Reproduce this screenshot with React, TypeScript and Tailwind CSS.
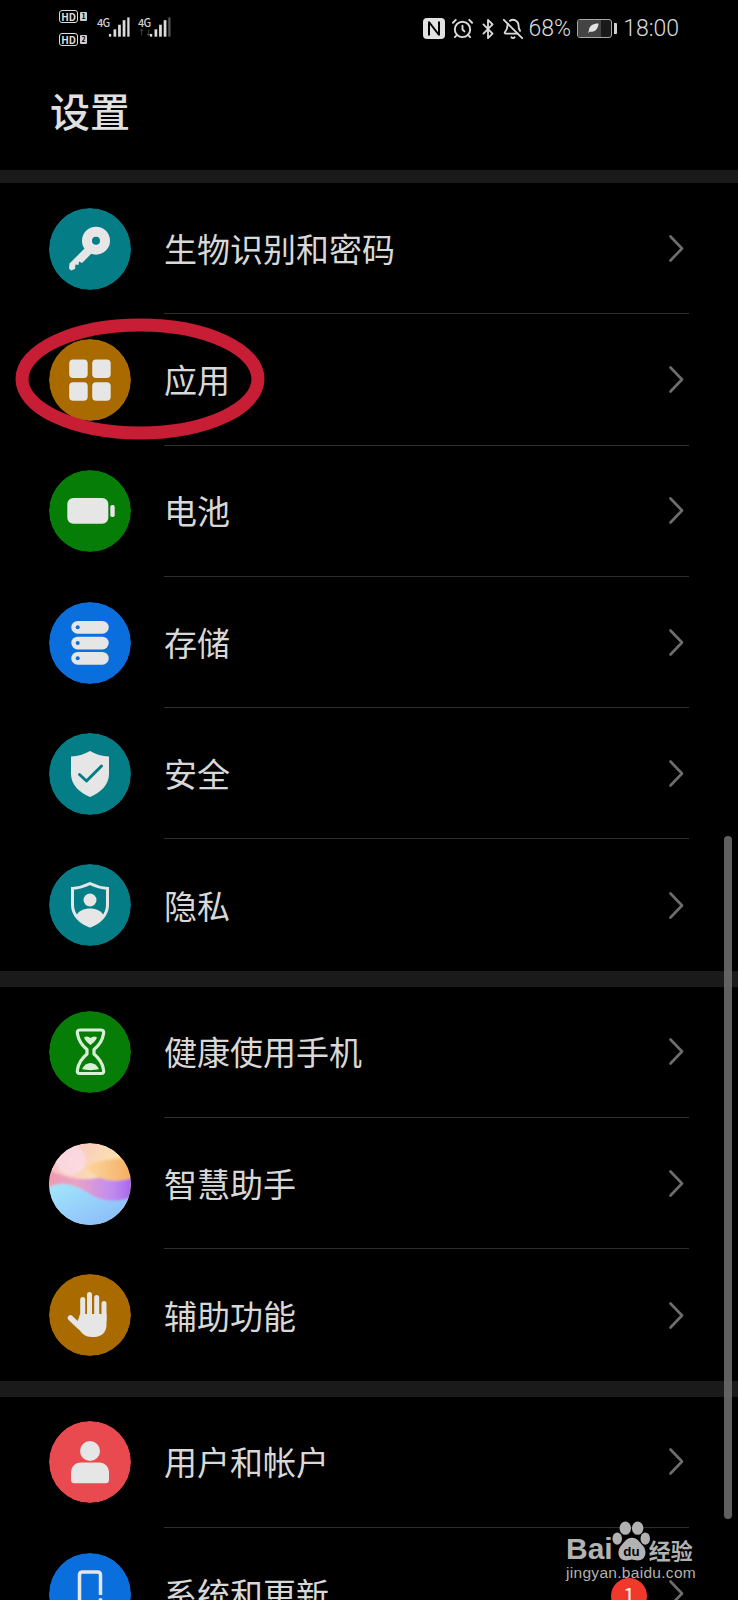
import type { ReactNode } from "react";
import { AlarmClock, BellOff, Bluetooth } from "lucide-react";

const TEAL = "#047d87";
const AMBER = "#a96a00";
const GREEN = "#067d06";
const BLUE = "#0a6fdc";
const INK = "#e6e6e6";

function Glyph({ children }: { children: ReactNode }) {
  return (
    <svg viewBox="0 0 82 82" className="h-[82px] w-[82px] rounded-full">
      {children}
    </svg>
  );
}

const KeyIcon = (
  <Glyph>
    <circle cx="41" cy="41" r="41" fill={TEAL} />
    <circle cx="47" cy="32.700" r="14" fill={INK} />
    <circle cx="47" cy="32.700" r="4" fill={TEAL} />
    <path
      fill={INK}
      d="M37 39l6 6-10 10-3-1.500-.5 3.500-3-.5-.5 4.500-4 1.500-2-2 .5-5z"
    />
  </Glyph>
);

const AppsIcon = (
  <Glyph>
    <circle cx="41" cy="41" r="41" fill={AMBER} />
    <rect x="20.200" y="20.500" width="18.500" height="18.500" rx="4" fill={INK} />
    <rect x="43.200" y="20.500" width="18.500" height="18.500" rx="4" fill={INK} />
    <rect x="20.200" y="43.200" width="18.500" height="18.500" rx="4" fill={INK} />
    <rect x="43.200" y="43.200" width="18.500" height="18.500" rx="4" fill={INK} />
  </Glyph>
);

const BatteryIcon = (
  <Glyph>
    <circle cx="41" cy="41" r="41" fill={GREEN} />
    <rect x="18.300" y="28" width="41" height="25.700" rx="6" fill={INK} />
    <rect x="61.300" y="35" width="4.400" height="12" rx="1.800" fill={INK} />
  </Glyph>
);

const StorageIcon = (
  <Glyph>
    <circle cx="41" cy="41" r="41" fill={BLUE} />
    {[19, 34.7, 50].map((y) => (
      <g key={y}>
        <rect x="22.300" y={y} width="37.400" height="12.700" rx="6.300" fill={INK} />
        <circle cx="28.700" cy={y + 6.3} r="2" fill={BLUE} />
      </g>
    ))}
  </Glyph>
);

const ShieldIcon = (
  <Glyph>
    <circle cx="41" cy="41" r="41" fill={TEAL} />
    <path
      fill={INK}
      d="M41 18c6 3.500 12 5 19 5.500V41c0 11-9 19-19 23-10-4-19-12-19-23V23.500C29 23 35 21.500 41 18z"
    />
    <path d="M30.500 41.500l7 6.500 15-15" fill="none" stroke={TEAL} strokeWidth="3" strokeLinecap="round" strokeLinejoin="round" />
  </Glyph>
);

const PrivacyIcon = (
  <Glyph>
    <circle cx="41" cy="41" r="41" fill={TEAL} />
    <path
      fill="none"
      stroke={INK}
      strokeWidth="3"
      d="M41 19.500c6 3 11 4.500 17.500 5V41c0 10-8 17.500-17.500 21-9.500-3.500-17.500-11-17.500-21V24.500c6.500-.5 11.500-2 17.500-5z"
    />
    <circle cx="41" cy="36" r="6.500" fill={INK} />
    <path fill={INK} d="M27.500 52c1-5 7.500-7.500 13.500-7.500S53.500 47 54.500 52c-3.500 5-8 8-13.500 10.500C35.500 60 31 57 27.500 52z" />
  </Glyph>
);

const HourglassIcon = (
  <Glyph>
    <circle cx="41" cy="41" r="41" fill={GREEN} />
    <path
      fill="none"
      stroke="#d8efd8"
      strokeWidth="3.200"
      strokeLinejoin="round"
      d="M31 19h21c2.500 0 3 1.500 2.500 4-1 6-4 11-9.500 15.500v4.500c5.500 4.500 8.500 9.500 9.500 15.500.5 2.500 0 4-2.500 4H31c-2.500 0-3-1.500-2.500-4 1-6 4-11 9.500-15.500v-4.500C32.500 34 29.500 29 28.500 23c-.5-2.500 0-4 2.500-4z"
    />
    <path fill="#d8efd8" d="M35 26.500c2.500-1.500 4.500-1 6.500.5 2-1.500 4-2 6.500-.5-1 3-4 5.500-6.500 7.500-2.500-2-5.500-4.500-6.500-7.500z" />
    <path fill="#d8efd8" d="M33 58c2-4 5-6 8.500-6s6.500 2 8.500 6c-5 1.500-12 1.500-17 0z" />
  </Glyph>
);

const AssistantIcon = (
  <Glyph>
    <defs>
      <linearGradient id="sphere-base" x1="0" y1="0" x2="1" y2="0.6">
        <stop offset="0" stopColor="#f6bcc8" />
        <stop offset="0.6" stopColor="#fbdcb4" />
        <stop offset="1" stopColor="#fbe3a8" />
      </linearGradient>
      <linearGradient id="sphere-blob" x1="0" y1="0" x2="1" y2="0">
        <stop offset="0" stopColor="#fbd7a0" />
        <stop offset="1" stopColor="#f6ab5c" />
      </linearGradient>
      <linearGradient id="sphere-band" x1="0" y1="0" x2="1" y2="0">
        <stop offset="0" stopColor="#f09aac" />
        <stop offset="0.35" stopColor="#e9a2c8" />
        <stop offset="0.75" stopColor="#bf8cf0" />
        <stop offset="1" stopColor="#a660e6" />
      </linearGradient>
      <linearGradient id="sphere-sea" x1="0" y1="0" x2="1" y2="1">
        <stop offset="0" stopColor="#a4e8fb" />
        <stop offset="1" stopColor="#84b2fa" />
      </linearGradient>
      <filter id="sphere-soft">
        <feGaussianBlur stdDeviation="1.200" />
      </filter>
    </defs>
    <circle cx="41" cy="41" r="41" fill="url(#sphere-base)" />
    <g filter="url(#sphere-soft)">
      <circle cx="22" cy="17" r="15" fill="#fbdbe6" opacity="0.8" />
      <path fill="url(#sphere-band)" d="M-4 26c10 3 20 9 36 10 10 1 20-2 54-8v40H-4z" />
      <path fill="url(#sphere-blob)" d="M36 24c10-6 30-10 50-8v18c-8 3-18 5-28 3-10-2-17-7-22-13z" />
      <path fill="url(#sphere-sea)" d="M-4 47c8-7 20-8 32-3 10 4 16 11 28 13 10 2 20 0 30-4v36H-4z" />
    </g>
  </Glyph>
);

const HandIcon = (
  <Glyph>
    <circle cx="41" cy="41" r="41" fill={AMBER} />
    <g stroke={INK} strokeWidth="5" strokeLinecap="round">
      <path d="M33.700 25.500V44" />
      <path d="M40.500 20.500V44" />
      <path d="M47.700 23.500V44" />
      <path d="M55 29.500V46" />
      <path d="M21.500 44l9.500 9" strokeWidth="5.500" />
    </g>
    <path fill={INK} d="M31 40h26.500v11c0 7-5 12-12 12h-3c-6 0-9-3-12-7l-3-5z" />
  </Glyph>
);

const UserIcon = (
  <Glyph>
    <circle cx="41" cy="41" r="41" fill="#e84a50" />
    <circle cx="41" cy="30" r="10" fill={INK} />
    <path fill={INK} d="M22 52c0-6 4-10.500 10-10.500h18c6 0 10 4.500 10 10.500v7c0 2-1.300 3.300-3.300 3.300H25.300C23.300 62.300 22 61 22 59z" />
  </Glyph>
);

const PhoneIcon = (
  <Glyph>
    <circle cx="41" cy="41" r="41" fill={BLUE} />
    <path
      fill="none"
      stroke={INK}
      strokeWidth="3.500"
      d="M51.500 42V22c0-2-1.200-3-3-3h-15c-1.800 0-3 1-3 3v38c0 2 1.200 3 3 3h15c1.800 0 3-1 3-3v-6"
    />
    <circle cx="51.500" cy="47" r="2" fill={INK} />
  </Glyph>
);

function Chevron() {
  return (
    <svg viewBox="0 0 15 27" className="h-[27px] w-[15px]" fill="none" stroke="#6e6e6e" strokeWidth="2.600">
      <path d="M1.500 1.500L13 13.500 1.500 25.500" strokeLinecap="round" strokeLinejoin="round" />
    </svg>
  );
}

function Row({ icon, label, last }: { icon: ReactNode; label: string; last?: boolean }) {
  return (
    <div className="flex h-[131.3px] items-center gap-[33px] px-[49px]">
      {icon}
      <div
        className={`flex flex-1 items-center justify-between self-stretch pr-[5px] ${
          last ? "" : "border-b border-[#2e2e2e]"
        }`}
      >
        <span className="text-[33px] leading-none text-[#d8d8d8]">{label}</span>
        <Chevron />
      </div>
    </div>
  );
}

function Band() {
  return <div className="h-[16px] bg-[#1a1a1a]" />;
}

function HdTag({ n }: { n: string }) {
  return (
    <div className="flex items-center gap-[2px]">
      <span className="flex h-[13px] w-[19px] items-center justify-center rounded-[3px] border border-[#dcdcdc] text-[10px] leading-none font-bold text-[#dcdcdc]">
        HD
      </span>
      <span className="flex h-[9px] w-[7px] items-center justify-center rounded-[1px] bg-[#cfcfcf] text-[7px] leading-none font-bold text-black">
        {n}
      </span>
    </div>
  );
}

function Signal({ dim }: { dim?: boolean }) {
  return (
    <div className="flex items-start">
      <div className="flex w-[11px] flex-col items-start">
        <span className="text-[11px] leading-[10px] font-medium tracking-[-0.8px] text-[#cfcfcf]">4G</span>
        {dim && <span className="pt-[1px] text-[7px] leading-[9px] text-[#777777]">↑↓</span>}
      </div>
      <svg viewBox="0 0 24 22" className="h-[21px] w-[22px]" fill="#dcdcdc">
        <rect x="1" y="18" width="2.500" height="3" />
        <rect x="6" y="13" width="3" height="8" />
        <rect x="11" y="8" width="3" height="13" />
        <rect x="16" y="3" width="3" height="18" />
        <rect x="21" y="0" width="2.500" height="21" fill={dim ? "#555555" : "#dcdcdc"} />
      </svg>
    </div>
  );
}

function StatusBar() {
  return (
    <div className="flex h-[50px] items-start justify-between pr-[59px] pl-[59px] text-[#dcdcdc]">
      <div className="flex gap-[10px] pt-[10px]">
        <div className="flex flex-col gap-[10px]">
          <HdTag n="1" />
          <HdTag n="2" />
        </div>
        <div className="flex gap-[8px] pt-[7px]">
          <Signal />
          <Signal dim />
        </div>
      </div>
      <div className="flex items-center gap-[6px] pt-[17px]" style={{ fontFamily: "Roboto, sans-serif" }}>
        <svg viewBox="0 0 22 21" className="h-[21px] w-[22px]">
          <rect width="22" height="21" rx="4" fill="#e2e2e2" />
          <path d="M6 3.500v14M6 4l10 13M16 3.500v14" fill="none" stroke="#000000" strokeWidth="2" />
        </svg>
        <AlarmClock size={23} strokeWidth={2} />
        <Bluetooth size={22} strokeWidth={2} className="-mx-[3px]" />
        <BellOff size={22} strokeWidth={2} />
        <span className="-ml-[1px] text-[23px] leading-none font-light">68%</span>
        <div className="flex items-center gap-[2px]">
          <div className="flex h-[19px] w-[35px] items-center rounded-[3px] border border-[#a8a8a8] bg-[#1a1a1a]">
            <div className="flex h-full w-[23px] items-center justify-end rounded-l-[2px] bg-[#444444] pr-[2px]">
              <svg viewBox="0 0 12 12" className="h-[11px] w-[11px]" fill="#e2e2e2">
                <path d="M11.500.5C5 .5 1.500 3 1 8l-1 3.500 1.500-2C7 10.500 11 7 11.500.5z" />
              </svg>
            </div>
          </div>
          <div className="h-[11px] w-[3px] rounded-r-[1px] bg-[#cfcfcf]" />
        </div>
        <span className="text-[23px] leading-none font-light">18:00</span>
      </div>
    </div>
  );
}

function Watermark() {
  return (
    <div
      className="absolute top-[1520px] left-[566px] w-[134px] text-[#b2b2b2]"
      style={{ fontFamily: '"Liberation Sans", sans-serif' }}
    >
      <div className="flex h-[43px] items-end">
        <span className="text-[30px] leading-[28px] font-bold">Bai</span>
        <svg viewBox="0 0 40 44" className="-mx-[1px] h-[43px] w-[38px] shrink-0" fill="#b2b2b2">
          <ellipse cx="14" cy="8" rx="6" ry="7" />
          <ellipse cx="27" cy="8" rx="6" ry="7" />
          <ellipse cx="5.500" cy="19" rx="5" ry="6.500" />
          <ellipse cx="35" cy="19" rx="5" ry="6.500" />
          <path d="M21 18c6 0 8 5 12 9 4 5 3 15-6 15-3 0-4-1-6-1s-3 1-6 1c-9 0-10-10-6-15 4-4 6-9 12-9z" />
          <text x="20.500" y="37" textAnchor="middle" fontSize="14" fontWeight="700" fill="#000000">
            du
          </text>
        </svg>
        <span
          className="text-[22px] leading-[28px] font-bold"
          style={{ fontFamily: '"Noto Sans CJK SC", sans-serif' }}
        >
          经验
        </span>
      </div>
      <div className="text-[15.5px] leading-[20px] tracking-[0.3px]">jingyan.baidu.com</div>
    </div>
  );
}

export default function App() {
  return (
    <div
      className="relative h-[1600px] w-[738px] overflow-hidden bg-black"
      style={{ fontFamily: '"Noto Sans CJK SC", sans-serif' }}
    >
      <StatusBar />
      <div className="flex h-[120px] items-center pl-[50px]">
        <h1 className="text-[40px] leading-none font-medium text-[#e0e0e0]">设置</h1>
      </div>
      <div className="h-[13px] bg-[#1a1a1a]" />

      <Row icon={KeyIcon} label="生物识别和密码" />
      <Row icon={AppsIcon} label="应用" />
      <Row icon={BatteryIcon} label="电池" />
      <Row icon={StorageIcon} label="存储" />
      <Row icon={ShieldIcon} label="安全" />
      <Row icon={PrivacyIcon} label="隐私" last />
      <Band />
      <Row icon={HourglassIcon} label="健康使用手机" />
      <Row icon={AssistantIcon} label="智慧助手" />
      <Row icon={HandIcon} label="辅助功能" last />
      <Band />
      <Row icon={UserIcon} label="用户和帐户" />
      <Row icon={PhoneIcon} label="系统和更新" last />

      {/* red marker drawn over the screenshot */}
      <svg viewBox="0 0 250 122" className="absolute top-[318px] left-[15px] h-[122px] w-[250px]" fill="none">
        <ellipse cx="125" cy="61" rx="118" ry="54" stroke="#c81e35" strokeWidth="13" />
      </svg>

      <div className="absolute top-[836px] left-[724px] h-[683px] w-[8px] rounded-full bg-[#6a6a6a]/90" />

      <Watermark />

      <div className="absolute top-[1578px] left-[611px] flex h-[36px] w-[36px] justify-center rounded-full bg-[#f0392b] pt-[5px] text-[22px] leading-none text-[#eeeeee]">
        1
      </div>
    </div>
  );
}
